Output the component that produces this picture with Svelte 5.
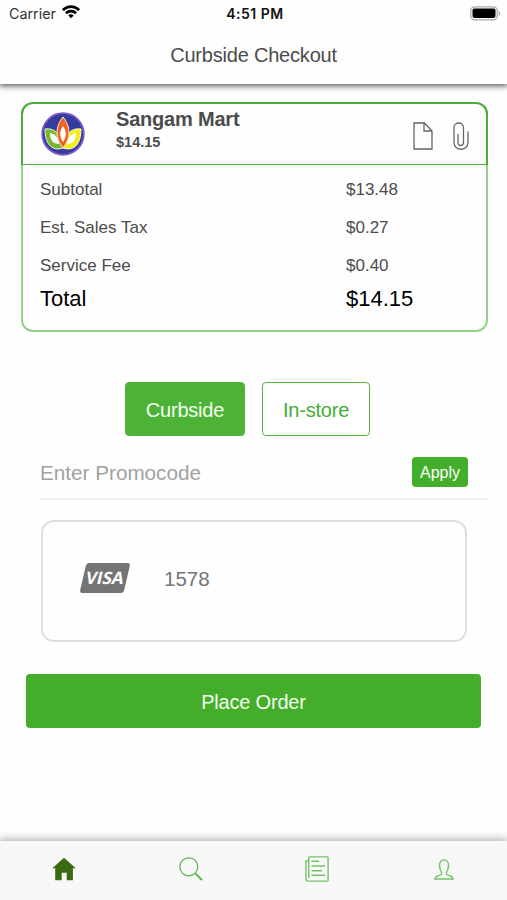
<script lang="ts">
	const charges = [
		{ label: 'Subtotal', amount: '$13.48' },
		{ label: 'Est. Sales Tax', amount: '$0.27' },
		{ label: 'Service Fee', amount: '$0.40' }
	];

	let pickup = $state('curbside');
	let promocode = $state('');
</script>

<div class="screen">
	<header class="top">
		<div class="status">
			<div class="carrier">
				<span>Carrier</span>
				<svg width="18" height="14" viewBox="0 0 18 14" fill="none" stroke="#000" stroke-width="2.700">
					<path d="M.9 5.100C5.500.5 12.500.5 17.100 5.100" />
					<path d="M3.900 8.200c2.900-2.800 7.300-2.800 10.200 0" />
					<path d="M6.300 10.400c1.600-1.400 3.800-1.400 5.400 0L9 13.200z" fill="#000" stroke="none" />
				</svg>
			</div>
			<span class="time">4:51 PM</span>
			<svg class="battery" width="31" height="15" viewBox="0 0 31 15">
				<rect x=".8" y=".8" width="26.400" height="13" rx="3.800" fill="#fff" stroke="#aaa" stroke-width="1.300" />
				<rect x="2.500" y="2.500" width="23" height="9.600" rx="2" />
				<path d="M28.700 5v5c2.100-.7 2.100-4.300 0-5z" fill="#aaa" />
			</svg>
		</div>
		<h1>Curbside Checkout</h1>
	</header>

	<main>
		<section class="order">
			<div class="store">
				<svg class="logo" width="44" height="44" viewBox="0 0 44 44">
					<circle cx="22" cy="22" r="20.800" fill="#353c9b" stroke="#8059c9" stroke-width="1.800" />
					<path d="M4 17c9-1 15 3 18 19C10 40 4 31 4 17z" fill="#78b82d" stroke="#eef4dd" />
					<path d="M40 17c-9-1-15 3-18 19 12 4 18-5 18-19z" fill="#f3ee16" stroke="#fffde0" />
					<path d="M9 21c5 1 8 4 9 11-6 0-9-4-9-11zM35 21c-5 1-8 4-9 11 6 0 9-4 9-11z" fill="#fff" />
					<path d="M22 5c-8 10-8 21 0 31 8-10 8-21 0-31z" fill="#ef631d" stroke="#fff0e4" />
					<path d="M22 14c-3.700 5-3.700 11 0 16 3.700-5 3.700-11 0-16z" fill="#fff" />
				</svg>
				<div class="store-name">
					<strong>Sangam Mart</strong>
					<span>$14.15</span>
				</div>
				<svg class="file" width="20" height="28" viewBox="0 0 20 28" fill="none" stroke="#666" stroke-width="1.300">
					<path d="M1 1h10.500L19 9v18H1zM11 1v8h8" />
				</svg>
				<svg class="clip" width="16" height="28" viewBox="0 0 16 28" fill="none" stroke="#666" stroke-width="1.300">
					<path d="M15 9.500v11c0 9-14 9-14 0V5.500c0-6 9.500-6 9.500 0v15c0 4-5.500 4-5.500 0v-8.500" />
				</svg>
			</div>

			<dl>
				{#each charges as charge (charge.label)}
					<div class="row">
						<dt>{charge.label}</dt>
						<dd>{charge.amount}</dd>
					</div>
				{/each}
				<div class="row total">
					<dt>Total</dt>
					<dd>$14.15</dd>
				</div>
			</dl>
		</section>

		<div class="pickup">
			<button type="button" class="curbside" class:active={pickup === 'curbside'} onclick={() => (pickup = 'curbside')}>Curbside</button>
			<button type="button" class="instore" class:active={pickup === 'instore'} onclick={() => (pickup = 'instore')}>In-store</button>
		</div>

		<div class="promo">
			<input placeholder="Enter Promocode" bind:value={promocode} />
			<button type="button">Apply</button>
		</div>

		<section class="payment">
			<div class="visa"><span>VISA</span></div>
			<span class="digits">1578</span>
		</section>

		<button type="button" class="place">Place Order</button>
	</main>

	<nav>
		<a href="#home" aria-label="Home">
			<svg width="24" height="24" viewBox="0 0 24 24" fill="#3d6910">
				<path d="M12 .8.300 11.200h2.900V23.200h6.500v-7.500h5v7.500h6.200v-12h2.900z" />
			</svg>
		</a>
		<a href="#search" aria-label="Search">
			<svg width="24" height="24" viewBox="0 0 24 24" fill="none" stroke="#55b448">
				<circle cx="9.800" cy="9.800" r="9" stroke-width="1.200" />
				<path d="m16.300 16.300 6.700 6.700" stroke-width="1.900" />
			</svg>
		</a>
		<a href="#orders" aria-label="Orders">
			<svg width="24" height="26" viewBox="0 0 24 26" fill="none" stroke="#73c467" stroke-width="1.400">
				<path d="M3.700.9h18.600q.8 0 .8.800v22.600q0 .8-.8.800H3q-2 0-2-2V5h2.700v17M3.700 22V.9M6.500 5.300h7.500M6.500 10h13.500M6.500 14.700h10.500M6.500 19.300h13.500" />
			</svg>
		</a>
		<a href="#account" aria-label="Account">
			<svg width="20" height="21" viewBox="0 0 20 21" fill="none" stroke="#73c467" stroke-width="1.400">
				<path d="M7.500 13.200C5.700 11 5.500 8.500 5.500 6c0-6.800 9-6.800 9 0 0 2.500-.2 5-2 7.200v2c1 1.400 6.200 1.300 6.700 4.800H.8c.5-3.500 5.700-3.400 6.700-4.800z" />
			</svg>
		</a>
	</nav>
</div>

<style>
	:global(body) {
		margin: 0;
		background: #fefefe;
	}

	.screen {
		box-sizing: border-box;
		display: flex;
		flex-direction: column;
		width: 507px;
		height: 900px;
		overflow: hidden;
		background: #fefefe;
		color: #4c4c4c;
		font-family: "Liberation Sans", Arial, sans-serif;
	}

	svg {
		display: block;
		flex: none;
	}

	button,
	input {
		box-sizing: border-box;
		margin: 0;
		padding: 0;
		font-family: inherit;
	}

	.top {
		flex: none;
		height: 84px;
		background: #fefefe;
		box-shadow: 0 1px 6px 1px rgba(0, 0, 0, 0.65);
	}

	.status {
		display: grid;
		grid-template-columns: 1fr auto 1fr;
		align-items: center;
		height: 27px;
		padding: 0 6px 0 9px;
	}

	.carrier {
		display: flex;
		gap: 6px;
		color: #333;
		font-size: 14.3px;
		font-family: Inter, sans-serif;
		line-height: 18px;
	}

	.time {
		color: #111;
		font: 600 14px/18px Inter, sans-serif;
		letter-spacing: 0.5px;
	}

	.battery {
		justify-self: end;
	}

	h1 {
		margin: 16px 0 0;
		font-size: 20px;
		font-weight: 400;
		line-height: 25px;
		text-align: center;
		letter-spacing: -0.2px;
	}

	main {
		flex: 1;
		padding: 18px 20px 0 21px;
	}

	.order {
		box-sizing: border-box;
		width: 467px;
		height: 230px;
		border: 2px solid #93d588;
		border-top: 0;
		border-radius: 12px;
	}

	.store {
		box-sizing: border-box;
		display: flex;
		height: 63px;
		margin: 0 -2px;
		padding-left: 18px;
		border: 2px solid #4bae38;
		border-bottom-width: 1px;
		border-radius: 12px 12px 0 0;
	}

	.logo {
		margin-top: 8px;
	}

	.store-name {
		display: flex;
		flex-direction: column;
		width: 297px;
		margin-left: 31px;
		font-weight: 700;
	}

	.store-name strong {
		margin-top: 3px;
		font-size: 20px;
		line-height: 25px;
		letter-spacing: -0.2px;
	}

	.store-name span {
		font-size: 14.5px;
		line-height: 20px;
	}

	.file {
		margin-top: 18px;
	}

	.clip {
		margin: 18px 0 0 20px;
	}

	dl {
		margin: 6px 0 0;
	}

	.row {
		display: grid;
		grid-template-columns: 306px 1fr;
		height: 38px;
		padding-left: 17px;
		font-size: 17px;
		line-height: 38px;
	}

	dd {
		margin: 0;
	}

	.total {
		height: 31px;
		color: #000;
		font-size: 22px;
		line-height: 28px;
	}

	.pickup {
		display: flex;
		gap: 17px;
		margin: 50px 0 0 104px;
	}

	.pickup button {
		height: 54px;
		padding-top: 2px;
		border: 1.5px solid #4db43a;
		border-radius: 4px;
		background: #fff;
		color: #44ac35;
		font-size: 20px;
		letter-spacing: -0.2px;
	}

	.pickup .curbside {
		width: 120px;
	}

	.pickup .instore {
		width: 108px;
	}

	.pickup .active {
		background: #4db336;
		color: #f5fff0;
	}

	.promo {
		box-sizing: border-box;
		display: flex;
		align-items: center;
		justify-content: space-between;
		height: 55px;
		margin: 9px -1px 0 19px;
		padding-right: 20px;
		border-bottom: 2px solid #f0f0f0;
	}

	.promo input {
		width: 300px;
		padding-top: 2px;
		border: 0;
		outline: 0;
		background: transparent;
		font-size: 20.7px;
	}

	.promo input::placeholder {
		color: #a2a2a2;
		opacity: 1;
	}

	.promo button {
		width: 56px;
		height: 30px;
		padding-top: 2px;
		border: 0;
		border-radius: 4px;
		background: #43ae2b;
		color: #fff;
		font-size: 16px;
	}

	.payment {
		box-sizing: border-box;
		display: flex;
		align-items: center;
		height: 122px;
		margin: 20px 20px 0;
		padding: 0 0 7px 40px;
		border: 2px solid #dedede;
		border-radius: 13px;
	}

	.visa {
		width: 44px;
		height: 30px;
		border-radius: 3px;
		background: #747474;
		color: #fff;
		font: 700 17px/30px "Open Sans", sans-serif;
		text-align: center;
		transform: skewX(-13deg);
	}

	.digits {
		margin-left: 37px;
		padding-top: 2px;
		color: #757575;
		font-size: 20.5px;
	}

	.place {
		display: block;
		width: 455px;
		height: 54px;
		margin: 32px 0 0 5px;
		padding-top: 2px;
		border: 0;
		border-radius: 4px;
		background: #44ae2b;
		color: #f3ffed;
		font-size: 20px;
		letter-spacing: -0.2px;
	}

	nav {
		display: grid;
		flex: none;
		grid-template-columns: repeat(4, 1fr);
		height: 59px;
		background: #f8f8f8;
		box-shadow: 0 -1px 8px 1px rgba(0, 0, 0, 0.3);
	}

	nav a {
		display: flex;
		align-items: center;
		justify-content: center;
		padding: 0 0 3px 1px;
	}
</style>
